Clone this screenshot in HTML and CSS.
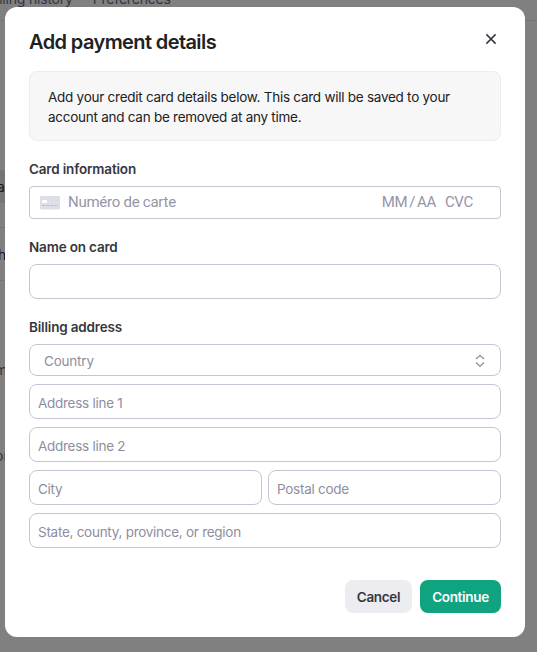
FILE: index.html
```
<!DOCTYPE html>
<html lang="en">
<head>
<meta charset="utf-8">
<title>Add payment details</title>
<link rel="stylesheet" href="styles.css">
</head>
<body>
<div class="page" aria-hidden="true">
  <div class="page-tabs"><span>Billing history</span><span>Preferences</span></div>
  <div class="page-chip"><span>ag</span></div>
  <div class="page-row"><span>h</span></div>
  <div class="page-note"><span>m</span></div>
  <div class="page-note"><span>or</span></div>
</div>
<div class="overlay">
  <form class="modal" role="dialog" aria-labelledby="title">
    <header class="modal-header">
      <h1 id="title">Add payment details</h1>
      <button class="close" type="button" aria-label="Close">
        <svg width="12" height="12" viewBox="0 0 12 12"><path d="M1.4 1.4l9.2 9.2M10.6 1.4l-9.2 9.2"/></svg>
      </button>
    </header>
    <p class="notice">Add your credit card details below. This card will be saved to your<br>account and can be removed at any time.</p>

    <div class="label">Card information</div>
    <div class="card-field">
      <svg class="card-icon" width="20" height="14" viewBox="0 0 20 14">
        <rect width="20" height="13.4" rx="1.3" fill="#dcdfe7"/>
        <rect x="2" y="4" width="5" height="3" rx=".8" fill="#fff"/>
        <path d="M2 9.5h16" stroke="#babdca" stroke-width="1" stroke-dasharray="3 1"/>
      </svg>
      <span class="card-number">Numéro de carte</span>
      <span class="card-expiry">MM / AA</span>
      <span class="card-cvc">CVC</span>
    </div>

    <label class="label" for="name">Name on card</label>
    <input class="field" id="name" type="text">

    <div class="label">Billing address</div>
    <div class="address">
      <div class="select">
        <span>Country</span>
        <svg width="10" height="14" viewBox="0 0 10 14"><path d="M1 5l4-3.6L9 5M1 8.6l4 3.6 4-3.6"/></svg>
      </div>
      <input class="field" type="text" placeholder="Address line 1">
      <input class="field" type="text" placeholder="Address line 2">
      <div class="pair">
        <input class="field" type="text" placeholder="City">
        <input class="field" type="text" placeholder="Postal code">
      </div>
      <input class="field" type="text" placeholder="State, county, province, or region">
    </div>

    <footer class="actions">
      <button class="btn cancel" type="button">Cancel</button>
      <button class="btn continue" type="button">Continue</button>
    </footer>
  </form>
</div>
</body>
</html>
```
FILE: styles.css
```
* { box-sizing: border-box; }

body {
  margin: 0;
  height: 652px;
  overflow: hidden;
  background: #808080;
  color: #202123;
  font: 13.5px/20px Inter, "Liberation Sans", sans-serif;
}

.page { height: 652px; overflow: hidden; color: #343541; font-size: 14px; }
.page-tabs {
  display: flex;
  gap: 20px;
  height: 21px;
  padding-left: 1px;
  border-bottom: 1px solid #757577;
  letter-spacing: -.2px;
}
.page-tabs span { margin-top: -11px; }
.page-tabs span:first-child { margin-left: -14px; }
.page-chip {
  width: 20px;
  height: 33px;
  margin-top: 149px;
  padding: 7px 0 0;
  background: #757578;
  color: #18181c;
}
.page-chip span { margin-left: -3px; }
.page-row {
  width: 20px;
  height: 54px;
  margin-top: 24px;
  padding-top: 17px;
  border: solid #757577;
  border-width: 1px 0;
  color: #24090b;
}
.page-row span { margin-left: -2px; }
.page-note { height: 86px; padding-top: 79px; }
.page-note span { margin-left: -5px; }

.overlay {
  position: absolute;
  inset: 0;
  padding: 7px 12px 15px 5px;
}
.modal {
  display: flex;
  flex-direction: column;
  height: 630px;
  padding: 24px;
  border-radius: 12px;
  background: #fff;
}

.modal-header { display: flex; justify-content: space-between; height: 40px; }
h1 { margin: 0; font-size: 20px; line-height: 23px; font-weight: 600; letter-spacing: -.6px; }
.close {
  width: 12px;
  height: 12px;
  margin: 2px 4px 0 0;
  padding: 0;
  border: 0;
  background: none;
}
.close svg { display: block; fill: none; stroke: #353740; stroke-width: 1.5; }

.notice {
  height: 70px;
  margin: 0;
  padding: 15px 18px;
  border: 1px solid #ececf1;
  border-radius: 8px;
  background: #f7f7f8;
  letter-spacing: -.26px;
  white-space: nowrap;
}

.label {
  height: 20px;
  margin-top: 18px;
  color: #353740;
  font-weight: 600;
  letter-spacing: -.17px;
}

.card-field {
  display: flex;
  align-items: center;
  height: 33px;
  margin-top: 7px;
  padding: 0 27px 2px 10px;
  border: 1px solid #c5c5d2;
  border-radius: 4px;
  color: #9595a7;
  font: 15px/20px Roboto, "Liberation Sans", sans-serif;
}
.card-icon { position: relative; top: 1.5px; }
.card-number { flex: 1; margin-left: 8px; letter-spacing: -.26px; }
.card-expiry { letter-spacing: -.4px; word-spacing: -1.2px; }
.card-cvc { margin-left: 9px; letter-spacing: -.3px; }

.field {
  width: 100%;
  height: 35px;
  margin: 0;
  padding: 2px 8px 0;
  border: 1px solid #c5c5d2;
  border-radius: 8px;
  background: #fff;
  color: #353740;
  font: inherit;
  letter-spacing: -.27px;
}
.field::placeholder { color: #8e8ea0; opacity: 1; }
#name { margin-top: 7px; }

.address { display: flex; flex-direction: column; gap: 8px; margin-top: 7px; }
.select {
  display: flex;
  align-items: center;
  justify-content: space-between;
  height: 32px;
  padding: 1px 15px 0 14px;
  border: 1px solid #c5c5d2;
  border-radius: 8px;
  color: #8e8ea0;
  letter-spacing: -.2px;
}
.select svg { fill: none; stroke: #999; stroke-width: 1.4; }
.pair { display: grid; grid-template-columns: 1fr 1fr; gap: 6px; }

.actions { display: flex; justify-content: flex-end; gap: 8px; margin-top: 32px; }
.btn {
  height: 33px;
  padding: 1px 0 0;
  border: 0;
  border-radius: 8px;
  font: 600 13.5px/20px Inter, "Liberation Sans", sans-serif;
  letter-spacing: -.32px;
}
.cancel { width: 67px; background: #ececf1; color: #353740; }
.continue { width: 81px; background: #10a37f; color: #fff; }
```
